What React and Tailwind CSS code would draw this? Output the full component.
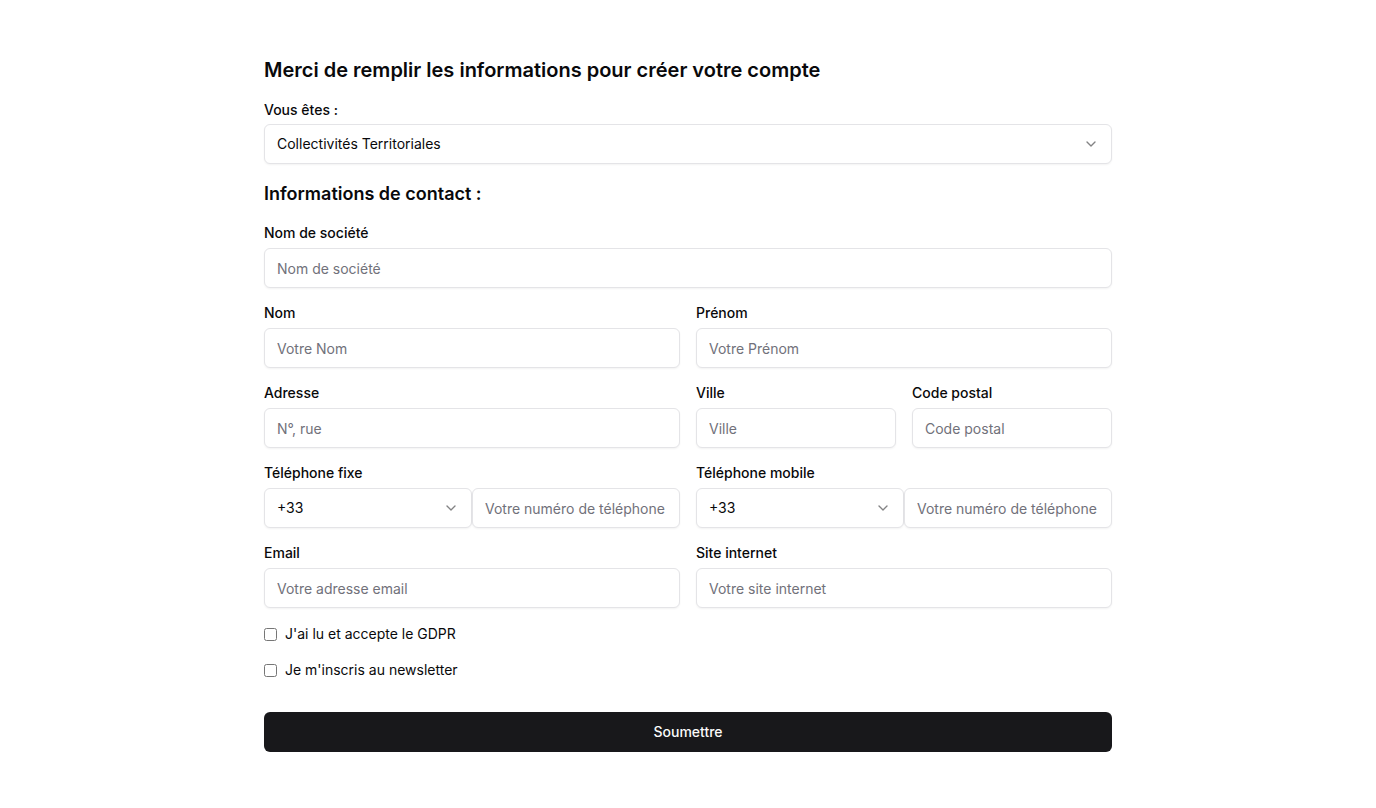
import { ChevronDown } from "lucide-react";

const inputCls =
  "w-full h-10 rounded-md border border-[#e4e4e7] bg-white px-3 text-sm text-[#09090b] placeholder:text-[#71717a] shadow-xs outline-none";

function Field({ label, placeholder, className = "" }) {
  return (
    <div className={className}>
      <label className="block text-sm font-medium leading-none text-[#09090b]">{label}</label>
      <input className={`${inputCls} mt-2`} placeholder={placeholder} />
    </div>
  );
}

function SelectBox({ value, className = "" }) {
  return (
    <button
      type="button"
      className={`flex h-10 items-center justify-between rounded-md border border-[#e4e4e7] bg-white px-3 text-sm text-[#09090b] shadow-xs ${className}`}
    >
      <span>{value}</span>
      <ChevronDown className="h-4 w-4 opacity-50" />
    </button>
  );
}

function Phone({ label }) {
  return (
    <div>
      <label className="block text-sm font-medium leading-none text-[#09090b]">{label}</label>
      <div className="mt-2 grid grid-cols-2">
        <SelectBox value="+33" className="w-full" />
        <input className={inputCls} placeholder="Votre numéro de téléphone" />
      </div>
    </div>
  );
}

export default function App() {
  return (
    <div className="min-h-screen bg-white font-['Inter',sans-serif] text-[#09090b]">
      <form className="mx-auto w-[848px] pt-14 pb-14">
        <h1 className="text-xl font-semibold leading-7">Merci de remplir les informations pour créer votre compte</h1>

        <label className="mt-4 block text-sm font-medium leading-5">Vous êtes :</label>
        <SelectBox value="Collectivités Territoriales" className="mt-1 w-full" />

        <h2 className="mt-4 text-lg font-semibold leading-7">Informations de contact :</h2>

        <Field className="mt-[18px]" label="Nom de société" placeholder="Nom de société" />

        <div className="mt-[18px] grid grid-cols-2 gap-4">
          <Field label="Nom" placeholder="Votre Nom" />
          <Field label="Prénom" placeholder="Votre Prénom" />
        </div>

        <div className="mt-[18px] grid grid-cols-2 gap-4">
          <Field label="Adresse" placeholder="N°, rue" />
          <div className="grid grid-cols-2 gap-4">
            <Field label="Ville" placeholder="Ville" />
            <Field label="Code postal" placeholder="Code postal" />
          </div>
        </div>

        <div className="mt-[18px] grid grid-cols-2 gap-4">
          <Phone label="Téléphone fixe" />
          <Phone label="Téléphone mobile" />
        </div>

        <div className="mt-[18px] grid grid-cols-2 gap-4">
          <Field label="Email" placeholder="Votre adresse email" />
          <Field label="Site internet" placeholder="Votre site internet" />
        </div>

        <label className="mt-4 flex h-5 items-center gap-2 text-sm">
          <input type="checkbox" className="h-[13px] w-[13px]" />
          J'ai lu et accepte le GDPR
        </label>
        <label className="mt-4 flex h-5 items-center gap-2 text-sm">
          <input type="checkbox" className="h-[13px] w-[13px]" />
          Je m'inscris au newsletter
        </label>

        <button type="button" className="mt-8 h-10 w-full rounded-md bg-[#18181b] text-sm font-medium text-[#fafafa]">
          Soumettre
        </button>
      </form>
    </div>
  );
}
